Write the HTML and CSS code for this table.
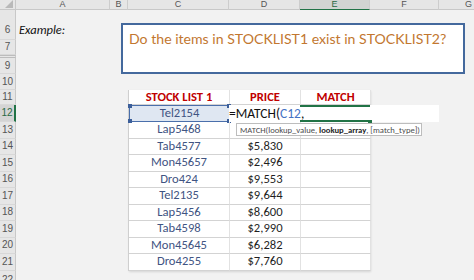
FILE: index.html
```html
<!DOCTYPE html>
<html>
<head>
<meta charset="utf-8">
<link rel="stylesheet" href="styles.css">
</head>
<body>
<div class="sheet">
  <div class="example">Example:</div>

  <div class="table">
    <div class="cell hd">STOCK LIST 1</div><div class="cell hd">PRICE</div><div class="cell hd">MATCH</div>
    <div class="cell nm ref">Tel2154<i class="h tl"></i><i class="h tr"></i><i class="h bl"></i><i class="h br"></i></div><div class="cell pr"></div><div class="cell"></div>
    <div class="cell nm">Lap5468</div><div class="cell pr"></div><div class="cell"></div>
    <div class="cell nm">Tab4577</div><div class="cell pr">$5,830</div><div class="cell"></div>
    <div class="cell nm">Mon45657</div><div class="cell pr">$2,496</div><div class="cell"></div>
    <div class="cell nm">Dro424</div><div class="cell pr">$9,553</div><div class="cell"></div>
    <div class="cell nm">Tel2135</div><div class="cell pr">$9,644</div><div class="cell"></div>
    <div class="cell nm">Lap5456</div><div class="cell pr">$8,600</div><div class="cell"></div>
    <div class="cell nm">Tab4598</div><div class="cell pr">$2,990</div><div class="cell"></div>
    <div class="cell nm">Mon45645</div><div class="cell pr">$6,282</div><div class="cell"></div>
    <div class="cell nm">Dro4255</div><div class="cell pr">$7,760</div><div class="cell"></div>
  </div>

  <div class="editor"><span>=MATCH(</span><span class="blue">C12</span><span>,</span></div>

  <div class="corner"><span class="tri"></span></div>
  <div class="colhead">A</div>
  <div class="colhead">B</div>
  <div class="colhead">C</div>
  <div class="colhead">D</div>
  <div class="colhead sel">E</div>
  <div class="colhead">F</div>
  <div class="colhead">G</div>

  <div class="rowhead r6">6</div>
  <div class="rowhead">7</div>
  <div class="rowhead thin"></div>
  <div class="rowhead">9</div>
  <div class="rowhead">10</div>
  <div class="rowhead">11</div>
  <div class="rowhead sel">12</div>
  <div class="rowhead">13</div>
  <div class="rowhead">14</div>
  <div class="rowhead">15</div>
  <div class="rowhead">16</div>
  <div class="rowhead">17</div>
  <div class="rowhead">18</div>
  <div class="rowhead">19</div>
  <div class="rowhead">20</div>
  <div class="rowhead">21</div>
  <div class="rowhead last">22</div>

  <div class="textbox">Do the items in STOCKLIST1 exist in STOCKLIST2?</div>
  <div class="tooltip">MATCH(lookup_value, <b>lookup_array</b>, [match_type])</div>
</div>
</body>
</html>
```

FILE: styles.css
```css
* { box-sizing: border-box; margin: 0; padding: 0; }
html, body { margin: 0; width: 474px; height: 280px; overflow: hidden; background: #f2f2f2; }
body { font-family: "Carlito", "Liberation Sans", sans-serif; color: #1f1f1f; }

.sheet {
  position: relative;
  display: grid;
  grid-template-columns: 16px 94px 18px 101px 71px 70px 69px 60px;
  grid-template-rows: 10px 30px 15px 3px 16px 16px 15px 17px repeat(10, 16.5px);
  width: 474px;
  height: 280px;
  overflow: hidden;
  background: #f2f2f2;
}

.corner {
  grid-column: 1; grid-row: 1;
  background: #e6e6e6;
  border-right: 1px solid #c8c8c8;
  border-bottom: 1px solid #c8c8c8;
  display: flex; align-items: flex-end; justify-content: flex-end;
  padding: 0 2px 1px 0;
}
.tri {
  width: 0; height: 0;
  border-left: 8px solid transparent;
  border-bottom: 8px solid #b9b9b9;
}

.colhead {
  background: #e6e6e6;
  border-right: 1px solid #cdcdcd;
  border-bottom: 1px solid #c8c8c8;
  font: 9px "Liberation Sans", sans-serif;
  color: #555;
  display: flex; align-items: center; justify-content: center;
  line-height: 1;
}
.colhead.sel { background: #d2d4d2; color: #2a6a45; border-bottom: 1px solid #217346; }

.rowhead {
  grid-column: 1;
  background: #e6e6e6;
  border-right: 1px solid #c8c8c8;
  border-bottom: 1px solid #d8d8d8;
  font: 10px "Liberation Sans", sans-serif;
  color: #555;
  display: flex; align-items: center; justify-content: center;
  line-height: 1;
}
.rowhead.r6 { align-items: flex-end; padding-bottom: 4px; }
.rowhead.thin { border-top: 1px solid #bcbcbc; border-bottom: 1px solid #bcbcbc; }
.rowhead.sel { background: #d4d4d4; color: #2a6a45; border-right: 2px solid #217346; }
.rowhead.last { align-items: flex-start; padding-top: 4px; }

.example {
  grid-column: 2; grid-row: 2;
  display: flex; align-items: flex-end;
  padding: 0 0 3px 3px;
  font-style: italic;
  font-size: 12.5px;
  color: #111;
}

.table {
  grid-column: 4 / 7; grid-row: 7 / 18;
  display: grid;
  grid-template-columns: 101px 71px 70px;
  grid-template-rows: 15px 17px repeat(9, 16.5px);
  background: #fff;
  border-left: 1px solid #cfcfcf;
  box-shadow: 1px 1px 2px rgba(0,0,0,0.12);
}
.cell {
  position: relative;
  display: flex; align-items: center; justify-content: center;
  border-bottom: 1px solid #d3d3d3;
  border-right: 1px solid #e2e2e2;
  font-size: 12.6px;
  line-height: 1;
  white-space: nowrap;
}
.cell.hd { color: #c00000; font-weight: bold; font-size: 12.6px; }
.cell.nm { color: #3f5482; }
.cell.pr { color: #1f1f1f; }
.cell.ref { background: #dfe7f2; border: 1px solid #4a6fab; }
.h { position: absolute; width: 4px; height: 4px; background: #3c5f9a; }
.h.tl { left: -2px; top: -2px; }
.h.tr { right: -2px; top: -2px; }
.h.bl { left: -2px; bottom: -2px; }
.h.br { right: -2px; bottom: -2px; }

.editor {
  grid-column: 5 / 8; grid-row: 8;
  position: relative;
  z-index: 2;
  background: #fff;
  display: flex; align-items: center;
  padding-left: 0;
  font-size: 13.5px;
  color: #111;
  white-space: nowrap;
}
.editor::before {
  content: "";
  position: absolute;
  left: 71px; width: 70px; top: 0; bottom: 0;
  border-top: 2px solid #217346;
  border-bottom: 2px solid #217346;
}
.editor::after {
  content: "";
  position: absolute;
  left: 139px; bottom: -2px;
  width: 4px; height: 4px;
  background: #217346;
}
.blue { color: #4472c4; }

.textbox {
  position: absolute;
  left: 121px; top: 23px;
  width: 344px; height: 51px;
  background: #fff;
  border: 2px solid #44699d;
  padding: 5px 0 0 6px;
  font: 14.1px "Lato", sans-serif;
  color: #c27730;
  white-space: nowrap;
  z-index: 3;
}

.tooltip {
  position: absolute;
  left: 236px; top: 123px;
  width: 186px; height: 13px;
  background: #fff;
  border: 1px solid #bdbdbd;
  font: 8.6px "Carlito", "Liberation Sans", sans-serif;
  color: #4a4a4a;
  padding: 1px 0 0 3px;
  white-space: nowrap;
  overflow: hidden;
  z-index: 4;
  line-height: 10px;
}
.tooltip b { color: #222; }
```
